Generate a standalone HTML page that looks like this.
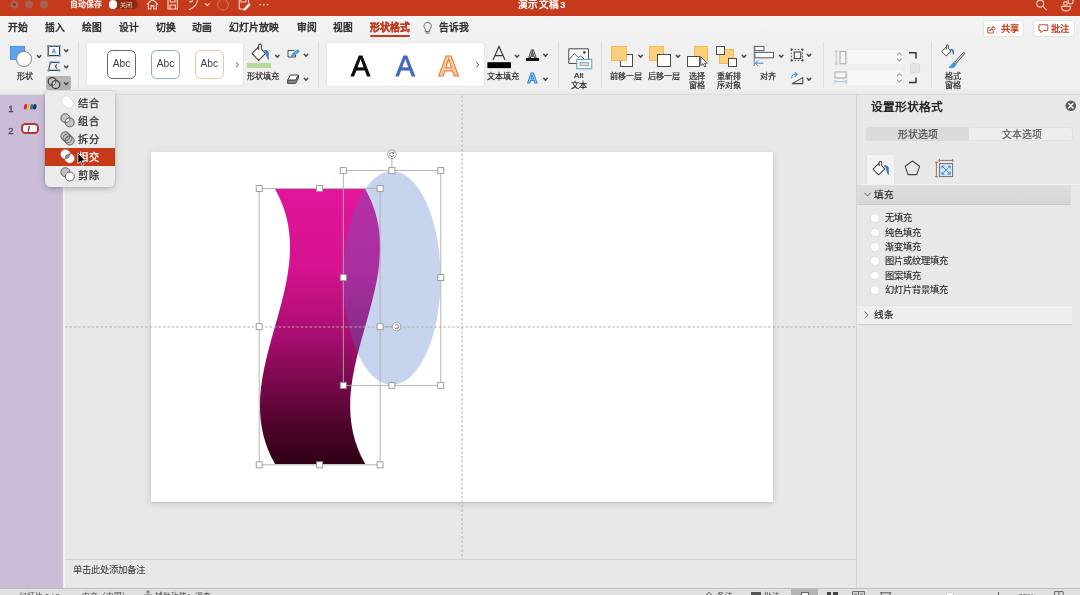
<!DOCTYPE html>
<html lang="zh-CN">
<head>
<meta charset="utf-8">
<title>演示文稿3</title>
<style>
*{box-sizing:border-box;margin:0;padding:0}
html,body{width:1080px;height:595px;overflow:hidden;background:#e8e8e8;font-family:"Liberation Sans",sans-serif;color:#333}
.a{position:absolute}
.t{position:absolute;white-space:nowrap;line-height:1;font-size:9.6px;color:#2f2f2f;filter:blur(0.3px)}
.b{font-weight:bold}
svg{position:absolute;overflow:visible}
#titlebar{left:0;top:0;width:1080px;height:15.8px;background:#c43a1b}
#tabs{left:0;top:16px;width:1080px;height:22px;background:linear-gradient(#f4f4f4,#f0f0f0)}
#ribbon{left:0;top:38px;width:1080px;height:57.2px;background:#f0f0f0;border-bottom:1.1px solid #dbdbdb}
#sidebar{left:0;top:95.3px;width:63px;height:493px;background:#c9bdd8}
#sidestrip{left:63px;top:95.3px;width:2px;height:493px;background:#f4f1f7}
#canvas{left:65px;top:95.3px;width:791px;height:493px;background:#e8e8e8}
#panel{left:856px;top:95.3px;width:224px;height:493px;background:#e8e8e8;border-left:1px solid #d4d4d4}
#status{left:0;top:587.6px;width:1080px;height:8px;background:#e1e1e1;border-top:1px solid #bfbfbf;overflow:hidden}
.sep{position:absolute;width:1px;background:#dedede;top:42px;height:46px}
.tab{font-size:9.8px;color:#242424;-webkit-text-stroke-width:0.4px}
.abc{width:29px;height:29px;border:1.55px solid #555;border-radius:5.5px;background:#fff;font-size:10.2px;line-height:26px;text-align:center;color:#3c3c3c;filter:blur(0.25px)}
.wa{filter:blur(0.3px);top:51.4px;width:40px;height:30px;font-size:28.6px;line-height:30px;text-align:center;-webkit-text-stroke-width:0.8px}
.mi{font-size:10.2px;letter-spacing:0.3px;color:#2e2e2e;-webkit-text-stroke-width:0.25px;margin-top:0.4px}
.pl{font-size:9.25px;color:#2a2a2a;-webkit-text-stroke-width:0.15px}
.rb{width:9.6px;height:9.6px;border-radius:50%;background:#fff;border:0.7px solid #dcdcdc}
.lbl{font-size:8.1px;color:#262626;-webkit-text-stroke-width:0.2px}
</style>
</head>
<body>
<div id="titlebar" class="a">
<svg width="60" height="16" style="left:0;top:0" viewBox="0 0 60 16">
<circle cx="14.5" cy="4.5" r="4.1" fill="#a86050"/><circle cx="14.5" cy="4.5" r="1.3" fill="#6e2a1c"/>
<circle cx="29" cy="4.5" r="4.1" fill="#a86050"/>
<circle cx="44" cy="4.5" r="4.1" fill="#a86050"/>
</svg>
<div class="t b" style="left:69.8px;top:1.1px;font-size:7.9px;color:#fff">自动保存</div>
<div class="a" style="left:108.5px;top:0;width:29px;height:9.2px;border-radius:0 0 5px 5px/0 0 5px 5px;background:#8d2a15;border-radius:5px"></div>
<div class="a" style="left:109px;top:0.4px;width:8.4px;height:8.4px;border-radius:50%;background:#fff"></div>
<div class="t" style="left:120px;top:1.6px;font-size:6px;color:#f3d9d2">关闭</div>
<svg width="130" height="16" style="left:140px;top:0" viewBox="140 0 130 16" fill="none" stroke="#f7d6cc" stroke-width="1.1" stroke-linecap="round" stroke-linejoin="round">
<path d="M147.2 4.2 L152.4 -0.6 L157.6 4.2 M148.4 3.4 V9 H151 V5.6 H153.8 V9 H156.4 V3.4"/>
<path d="M168 -1 V9 H177.4 V0.5 L176 -1 M170 9 V5 H175.4 V9 M170.2 -1 V2 H175 V-1"/>
<path d="M189.5 9.6 C194 7.5 197.8 4 197.6 -1 M189.5 1.6 H192.2 V-1"/>
<path d="M205.4 3.6 L207.3 5.6 L209.2 3.6" stroke-width="1.2"/>
<path d="M226 0.2 A5.4 5.4 0 1 1 220 0.2" stroke="#d0705a"/>
<path d="M239.2 -1 V9 H243.5 M239.2 9 M241 -1 V2 H246 V-1 M248.6 -1 V2.5"/>
<path d="M244.3 8.6 L248.8 3.4 L250.3 4.8 L245.8 9.8 L243.8 10.2 Z" fill="#fff" stroke="#fff" stroke-width="0.6"/>
<g fill="#f7d6cc" stroke="none"><circle cx="260.2" cy="4.6" r="0.9"/><circle cx="263.9" cy="4.6" r="0.9"/><circle cx="267.6" cy="4.6" r="0.9"/></g>
</svg>
<div class="t b" style="left:518px;top:0.2px;font-size:9.7px;color:#fff;letter-spacing:0.25px">演示文稿<span style="margin-left:1px">3</span></div>
<svg width="50" height="16" style="left:1030px;top:0" viewBox="1030 0 50 16" fill="none" stroke="#f7d6cc" stroke-width="1.1" stroke-linecap="round">
<circle cx="1040.2" cy="3.6" r="3.5"/><path d="M1042.8 6.2 L1046.4 9.8"/>
<circle cx="1070.6" cy="1.4" r="2.5"/><circle cx="1065.4" cy="3.4" r="1.8"/><path d="M1061.4 6.4 H1070.6 C1070.6 12.4 1061.4 12.4 1061.4 6.4 Z"/>
</svg>
</div>
<div id="tabs" class="a">
<div class="t tab" style="left:8.3px;top:7.1px">开始</div>
<div class="t tab" style="left:45.4px;top:7.1px">插入</div>
<div class="t tab" style="left:81.8px;top:7.1px">绘图</div>
<div class="t tab" style="left:119.2px;top:7.1px">设计</div>
<div class="t tab" style="left:155.8px;top:7.1px">切换</div>
<div class="t tab" style="left:192.3px;top:7.1px">动画</div>
<div class="t tab" style="left:229px;top:7.1px">幻灯片放映</div>
<div class="t tab" style="left:296.8px;top:7.1px">审阅</div>
<div class="t tab" style="left:333px;top:7.1px">视图</div>
<div class="t tab b" style="left:369.6px;top:7.1px;color:#c23b1c">形状格式</div>
<div class="a" style="left:369.5px;top:19.4px;width:40px;height:1.8px;background:#c23b1c;border-radius:1px"></div>
<svg width="12" height="14" style="left:422px;top:5px" viewBox="0 0 12 14" fill="none" stroke="#555" stroke-width="0.9" stroke-linecap="round"><path d="M3.6 8.6 C1 6.5 1.4 1.4 5.6 1.4 C9.8 1.4 10.2 6.5 7.6 8.6 V10.4 H3.6 Z M4 12 H7.2"/></svg>
<div class="t tab" style="left:438.6px;top:7.1px">告诉我</div>
<div class="a" style="left:982.6px;top:3.8px;width:41.4px;height:17.6px;background:#fff;border:1px solid #e6e4e2;border-radius:3px"></div>
<svg width="9" height="9" style="left:987.4px;top:8.8px" viewBox="0 0 9 9" fill="none" stroke="#c23b1c" stroke-width="0.9" stroke-linecap="round" stroke-linejoin="round"><path d="M2.8 2.6 H0.8 V8 H6.4 V6.4 M2.8 5.6 C3.2 3.6 4.4 2.8 6 2.8 V1 L8.2 3.4 L6 5.6 V4.2 C4.6 4.2 3.6 4.6 2.8 5.6 Z"/></svg>
<div class="t b" style="left:1001px;top:8.5px;font-size:9.3px;color:#c23b1c">共享</div>
<div class="a" style="left:1033px;top:3.8px;width:41.6px;height:17.6px;background:#fff;border:1px solid #e6e4e2;border-radius:3px"></div>
<svg width="12" height="11" style="left:1037.8px;top:8.2px" viewBox="0 0 12 11" fill="none" stroke="#c23b1c" stroke-width="0.95" stroke-linejoin="round"><path d="M1 0.8 H9.8 V6.4 H5.2 L3 8.6 V6.4 H1 Z"/></svg>
<div class="t b" style="left:1051.2px;top:8.5px;font-size:9.3px;color:#c23b1c">批注</div>
</div>
<div id="ribbon" class="a"></div>
<div id="rc" class="a" style="left:0;top:0;width:1080px;height:95px">
<div class="a" style="left:0;top:88.5px;width:1080px;height:5.7px;background:linear-gradient(#eeeeee,#eaeaea)"></div>
<div class="a" style="left:0;top:94.2px;width:1080px;height:1.1px;background:#dcdcdc"></div>
<!-- shapes -->
<div class="a" style="left:10.2px;top:45.5px;width:14.8px;height:14.3px;background:#5fa2ee;border:1px solid #4b93e3"></div>
<div class="a" style="left:16.2px;top:51.2px;width:15.6px;height:15.6px;border-radius:50%;background:#fff;border:1.3px solid #828282"></div>
<div class="t lbl" style="left:16.8px;top:72.5px">形状</div>
<!-- textbox icon -->
<svg width="14" height="12" style="left:46.5px;top:44.5px" viewBox="0 0 14 12"><rect x="1.2" y="1.2" width="11.4" height="9.4" fill="#f6f6f6" stroke="#3c3c3c" stroke-width="1.2"/><g fill="#4a90d9"><rect x="0.2" y="0.2" width="2" height="2"/><rect x="11.6" y="0.2" width="2" height="2"/><rect x="0.2" y="9.6" width="2" height="2"/><rect x="11.6" y="9.6" width="2" height="2"/></g><path d="M5.3 8.2 L6.9 3.8 L8.5 8.2 M5.9 6.8 H7.9" fill="none" stroke="#4f8fdc" stroke-width="1"/></svg>
<!-- edit shape icon -->
<svg width="14" height="11" style="left:46.5px;top:61px" viewBox="0 0 14 11"><path d="M3.6 1.4 H11.4 M3.6 1.4 C2.8 4 1.8 6.6 1.6 9.4 H12 M10 3.4 C8 4.4 8.2 6.6 10.2 7.4" fill="none" stroke="#444" stroke-width="1.1"/><g fill="#4a90d9"><circle cx="3.6" cy="1.4" r="1.2"/><circle cx="11.6" cy="1.4" r="1.2"/><circle cx="1.6" cy="9.4" r="1.2"/><circle cx="12.2" cy="9.4" r="1.2"/></g></svg>
<!-- merge button -->
<div class="a" style="left:45.6px;top:76px;width:25.2px;height:14.4px;background:#b5b5b5;border-radius:2px"></div>
<svg width="14" height="13" style="left:46.6px;top:76.8px" viewBox="0 0 14 13"><circle cx="5.2" cy="4.5" r="4" fill="#c4c4c4" stroke="#3c3c3c" stroke-width="1.25"/><circle cx="8.8" cy="7.6" r="4" fill="#c4c4c4" stroke="#3c3c3c" stroke-width="1.25"/><path d="M5.35 8.5 A4 4 0 0 1 8.65 3.6 A4 4 0 0 1 5.35 8.5 Z" fill="#fff" stroke="#3c3c3c" stroke-width="0.9"/></svg>
<div class="sep" style="left:78px"></div>
<!-- shape styles gallery -->
<div class="a" style="left:86.8px;top:43.4px;width:156.6px;height:42px;background:#fff;box-shadow:0 0 0 0.6px #e0e0e0;border-radius:3px"></div>
<div class="a abc" style="left:107px;top:50px;border-color:#666">Abc</div>
<div class="a abc" style="left:151px;top:50px;border-color:#8fa8d2">Abc</div>
<div class="a abc" style="left:194.8px;top:50px;border-color:#f3c3a2">Abc</div>
<!-- shape fill -->
<svg width="20" height="19" style="left:250.5px;top:43px" viewBox="0 0 20 19" fill="none" stroke-linejoin="round" stroke-linecap="round">
<path d="M7.6 3.6 L1.2 10.6 L7.6 17.4 L14.4 10.6 L10.4 6.2 V2.6 C10.4 0.6 7.6 0.6 7.6 2.6 V6.6" stroke="#454545" stroke-width="1.15" fill="#fff"/>
<path d="M13.4 7.8 C16 6.6 17.6 8.6 17.4 11 C17.2 13.2 17.4 14.6 17.4 16.4 C16.2 14.4 15.6 12.8 15.4 10.8 C15.2 9.4 14.6 8.6 13.4 7.8 Z" fill="#3f72c4" stroke="#3f72c4" stroke-width="0.8"/>
</svg>
<div class="a" style="left:247px;top:62.5px;width:24.4px;height:5.6px;background:#b5da9b"></div>
<div class="t lbl" style="left:247.4px;top:72.5px">形状填充</div>
<!-- shape outline (pen) -->
<svg width="14" height="10" style="left:286.5px;top:48.6px" viewBox="0 0 14 10" fill="none" stroke-linecap="round" stroke-linejoin="round">
<path d="M7 1.4 H1 V8 H8.6 V6" stroke="#4a4a4a" stroke-width="1"/>
<path d="M4.6 7 L5.4 4.8 L10.6 0.8 L12.4 2.4 L7.2 6.4 Z" fill="#5aa7e8" stroke="#3f86d6" stroke-width="0.9"/>
</svg>
<!-- shape effects (eraser-like) -->
<svg width="14" height="11" style="left:286px;top:73.8px" viewBox="0 0 14 11" fill="none" stroke-linejoin="round">
<path d="M4.4 1 H12.4 L9.6 6.2 H1.6 Z" fill="#fff" stroke="#444" stroke-width="1"/>
<path d="M1.6 6.2 H9.6 L12.4 1 V4 L9.6 9.4 H1.6 Z" fill="#8a8a8a" stroke="#444" stroke-width="1"/>
</svg>
<div class="sep" style="left:318px"></div>
<!-- wordart gallery -->
<div class="a" style="left:326.8px;top:43.4px;width:157.4px;height:42.4px;background:#fff;box-shadow:0 0 0 0.6px #e0e0e0;border-radius:3px"></div>
<div class="a wa" style="left:340.5px;color:#0a0a0a">A</div>
<div class="a wa" style="left:385.3px;color:#4369bd">A</div>
<div class="a wa" style="left:428.7px;color:#f9caa6;font-weight:bold;font-size:29.4px;-webkit-text-stroke:1.1px #ee7d3c;top:50.8px">A</div>
<!-- text fill -->
<svg width="26" height="24" style="left:486px;top:45px" viewBox="0 0 26 24" fill="none">
<path d="M7 15 L13 1.4 L19 15 M9 10.6 H17" stroke="#3a3a3a" stroke-width="1.15"/>
<rect x="1.4" y="17.2" width="23.6" height="5.9" fill="#000"/>
</svg>
<div class="t lbl" style="left:487.4px;top:72.5px">文本填充</div>
<!-- text outline -->
<div class="a" style="left:526px;top:46.4px;width:13px;height:13px;font-size:11.6px;line-height:13px;font-weight:bold;text-align:center;color:#f4f4f4;-webkit-text-stroke:0.9px #3c3c3c;filter:blur(0.25px);margin-top:0.8px">A</div>
<div class="a" style="left:526.2px;top:58.4px;width:12.6px;height:2.4px;background:#111"></div>
<!-- text effects -->
<div class="a" style="left:525.4px;top:71px;width:14px;height:14px;font-size:14px;line-height:14px;font-weight:bold;color:#bfe0fb;-webkit-text-stroke:1px #2f82d6;text-align:center;filter:blur(0.25px)">A</div>
<div class="sep" style="left:558px"></div>
<!-- alt text -->
<svg width="25" height="22" style="left:567.5px;top:47.6px" viewBox="0 0 25 22" fill="none" stroke-linejoin="round">
<rect x="0.8" y="0.8" width="19.6" height="14.6" fill="#fff" stroke="#444" stroke-width="1"/>
<path d="M1 11.6 L6.4 5.6 L10.4 9.6 L12.4 8 L16 11" stroke="#444" stroke-width="0.9"/>
<circle cx="16.4" cy="4.4" r="1.3" fill="#444"/>
<rect x="8.8" y="11.4" width="15" height="9.4" fill="#fff" stroke="#3f9ad6" stroke-width="1"/>
<rect x="12" y="14.6" width="8.6" height="3" fill="#e6e6e6" stroke="#777" stroke-width="0.7"/>
</svg>
<div class="t lbl" style="left:574px;top:72.4px">Alt</div>
<div class="t lbl" style="left:570.8px;top:81.8px">文本</div>
<div class="sep" style="left:601px"></div>
<!-- bring forward -->
<div class="a" style="left:620px;top:54px;width:13.4px;height:13.2px;background:#fff;border:1.1px solid #4a4a4a"></div>
<div class="a" style="left:611px;top:46px;width:16px;height:15px;background:#fbcf7c;border:1px solid #f0b95a"></div>
<div class="t lbl" style="left:610.4px;top:72.5px">前移一层</div>
<!-- send backward -->
<div class="a" style="left:649px;top:46px;width:15.4px;height:15px;background:#fbcf7c;border:1px solid #f0b95a"></div>
<div class="a" style="left:657.4px;top:54px;width:13.8px;height:13.2px;background:#fff;border:1.1px solid #4a4a4a"></div>
<div class="t lbl" style="left:648px;top:72.5px">后移一层</div>
<!-- selection pane -->
<div class="a" style="left:694px;top:46px;width:14.4px;height:15px;background:#fbcf7c;border:1px solid #f0b95a"></div>
<div class="a" style="left:686.8px;top:56px;width:13.6px;height:11.2px;background:#fff;border:1.1px solid #4a4a4a"></div>
<svg width="9" height="12" style="left:699.6px;top:55.6px" viewBox="0 0 9 12"><path d="M0.8 0.8 V9.6 L3 7.6 L4.6 11 L6 10.4 L4.5 7.2 H7.4 Z" fill="#fff" stroke="#444" stroke-width="0.9" stroke-linejoin="round"/></svg>
<div class="t lbl" style="left:689.4px;top:72.5px">选择</div>
<div class="t lbl" style="left:689.4px;top:81.8px">窗格</div>
<!-- reorder -->
<div class="a" style="left:719px;top:49px;width:15.2px;height:15px;background:#fbcf7c;border:1px solid #f0b95a"></div>
<div class="a" style="left:715.8px;top:46px;width:9.4px;height:8.8px;background:#fff;border:1.1px solid #4a4a4a"></div>
<div class="a" style="left:727.6px;top:58px;width:9.4px;height:9.2px;background:#fff;border:1.1px solid #4a4a4a"></div>
<div class="t lbl" style="left:717.2px;top:72.5px">重新排</div>
<div class="t lbl" style="left:717.2px;top:81.8px">序对象</div>
<!-- align -->
<svg width="24" height="23" style="left:752.5px;top:45px" viewBox="0 0 24 23" fill="none">
<path d="M1.2 0.6 V21" stroke="#7d8791" stroke-width="1"/>
<rect x="1.9" y="1.4" width="9" height="4.2" fill="#fff" stroke="#5a5a5a" stroke-width="1"/>
<rect x="1.9" y="7.4" width="18.6" height="5.4" fill="#fff" stroke="#5a5a5a" stroke-width="1"/>
<path d="M10 18.2 H2.6 M5 15.6 L2.4 18.2 L5 20.8" stroke="#3f86d6" stroke-width="1" stroke-linecap="round" stroke-linejoin="round"/>
</svg>
<div class="t lbl" style="left:759.8px;top:72.5px">对齐</div>
<!-- group -->
<svg width="14" height="14" style="left:789.8px;top:48px" viewBox="0 0 14 14" fill="none" stroke="#444">
<rect x="4.2" y="4" width="6.6" height="6.6" stroke-width="1.1"/>
<path d="M1.4 1.4 V12.6 M12.6 1.4 V12.6 M1.4 1.4 H12.6 M1.4 12.6 H12.6" stroke-width="0.9" stroke-dasharray="1.6 1.6"/>
<g fill="#444" stroke="none"><rect x="0.6" y="0.6" width="1.8" height="1.8"/><rect x="11.6" y="0.6" width="1.8" height="1.8"/><rect x="0.6" y="11.6" width="1.8" height="1.8"/><rect x="11.6" y="11.6" width="1.8" height="1.8"/></g>
</svg>
<!-- rotate -->
<svg width="14" height="13" style="left:789.6px;top:72.2px" viewBox="0 0 14 13" fill="none" stroke-linejoin="round" stroke-linecap="round">
<path d="M2.2 11.6 H12.8 V5.6 Z" stroke="#444" stroke-width="1.05"/>
<path d="M1.8 6 C1.6 3.4 4 1.6 6.8 2.4 M5.2 0.6 L7.2 2.5 L5.2 4.4" stroke="#3f86d6" stroke-width="1.05"/>
</svg>
<div class="sep" style="left:823px"></div>
<!-- size -->
<svg width="13" height="15" style="left:833.5px;top:49.6px" viewBox="0 0 13 15" fill="none"><rect x="6" y="1.4" width="5.8" height="12.4" stroke="#a5a5a5" stroke-width="1" fill="#f6f6f6"/><path d="M2.2 1 V14.2 M0.6 1 H3.8 M0.6 14.2 H3.8" stroke="#a9bfd8" stroke-width="0.9"/></svg>
<div class="a" style="left:847.4px;top:48.5px;width:56.6px;height:16.4px;background:#f8f8f8;border:1px solid #ececec;border-radius:2px"></div>
<svg width="13" height="15" style="left:833.5px;top:70.4px" viewBox="0 0 13 15" fill="none"><rect x="1" y="2" width="11" height="6" stroke="#a5a5a5" stroke-width="1" fill="#f6f6f6"/><path d="M0.8 11.6 H12.2 M0.8 10 V13.2 M12.2 10 V13.2" stroke="#a9bfd8" stroke-width="0.9"/></svg>
<div class="a" style="left:847.4px;top:69.2px;width:56.6px;height:16.4px;background:#f8f8f8;border:1px solid #ececec;border-radius:2px"></div>
<svg width="10" height="40" style="left:895px;top:48px" viewBox="0 0 10 40" fill="none" stroke="#a2a2a2" stroke-width="1.1" stroke-linecap="round" stroke-linejoin="round">
<path d="M2.4 6.8 L4.4 4.8 L6.4 6.8 M2.4 11 L4.4 13 L6.4 11 M2.4 27.6 L4.4 25.6 L6.4 27.6 M2.4 31.8 L4.4 33.8 L6.4 31.8"/></svg>
<svg width="12" height="34" style="left:908px;top:50.6px" viewBox="0 0 12 34" fill="none">
<path d="M1 1.8 H8 V7.4 M1 31.6 H8 V26.4" stroke="#333" stroke-width="1.5"/>
<rect x="2.6" y="12.6" width="9" height="9" rx="1.6" fill="#e4e4e4" stroke="#d6d6d6" stroke-width="0.8"/>
</svg>
<div class="sep" style="left:931px"></div>
<!-- format pane -->
<svg width="26" height="26" style="left:940.5px;top:44.4px" viewBox="0 0 26 26" fill="none" stroke-linejoin="round" stroke-linecap="round">
<path d="M5.4 2.8 L0.8 7.6 L5.2 12 L10 7.4 L7.4 4.4 V2 C7.4 0.4 5.4 0.4 5.4 2 V5" stroke="#444" stroke-width="1" fill="#fff"/>
<path d="M9.6 5.4 C11.6 4.6 12.8 6 12.6 8 L12.6 10.4 C11.8 9 11.4 8 11.2 6.8 Z" fill="#3f72c4" stroke="#3f72c4" stroke-width="0.8"/>
<path d="M23.6 9.6 L15 19.6 L13.6 18.2 L22.4 8.6 Z" fill="#fff" stroke="#444" stroke-width="1"/>
<path d="M13.4 18.2 L15.2 20 C14.4 23.4 11 24.6 8 23.2 C10.4 22.4 10.6 19.2 13.4 18.2 Z" fill="#3f9ad6" stroke="#3f9ad6" stroke-width="0.8"/>
</svg>
<div class="t lbl" style="left:944.6px;top:72.5px">格式</div>
<div class="t lbl" style="left:944.6px;top:81.8px">窗格</div>


<svg width="1080" height="95" style="left:0;top:0" viewBox="0 0 1080 95" fill="none" stroke="#484848" stroke-width="1.45" stroke-linecap="round" stroke-linejoin="round">
<path d="M37.35 55.60 L39.10 57.60 L40.85 55.60"/><path d="M64.45 49.70 L66.20 51.70 L67.95 49.70"/><path d="M64.45 66.10 L66.20 68.10 L67.95 66.10"/><path d="M64.45 82.80 L66.20 84.80 L67.95 82.80"/><path d="M275.55 55.30 L277.30 57.30 L279.05 55.30"/><path d="M304.25 54.30 L306.00 56.30 L307.75 54.30"/><path d="M304.25 78.30 L306.00 80.30 L307.75 78.30"/><path d="M515.25 55.30 L517.00 57.30 L518.75 55.30"/><path d="M543.75 54.30 L545.50 56.30 L547.25 54.30"/><path d="M543.75 78.30 L545.50 80.30 L547.25 78.30"/><path d="M638.85 55.30 L640.60 57.30 L642.35 55.30"/><path d="M676.25 55.30 L678.00 57.30 L679.75 55.30"/><path d="M742.25 55.30 L744.00 57.30 L745.75 55.30"/><path d="M779.45 55.30 L781.20 57.30 L782.95 55.30"/><path d="M807.25 54.30 L809.00 56.30 L810.75 54.30"/><path d="M807.25 78.30 L809.00 80.30 L810.75 78.30"/><path d="M236.4 62.8 L238.6 64.8 L236.4 66.8" stroke-width="1"/><path d="M476.6 62.8 L478.8 64.8 L476.6 66.8" stroke-width="1"/>
</svg>
</div>
<div id="sidebar" class="a"></div>
<div class="t" style="left:8.2px;top:103.8px;font-size:9.6px;color:#4a4558;-webkit-text-stroke-width:0.3px">1</div>
<div class="t" style="left:8.2px;top:125.8px;font-size:9.6px;color:#4a4558;-webkit-text-stroke-width:0.3px">2</div>
<svg width="20" height="10" style="left:22px;top:102px" viewBox="0 0 20 10"><g>
<ellipse cx="3.6" cy="4.8" rx="1.7" ry="2.8" fill="#d8263a" transform="rotate(12 3.6 4.8)"/>
<ellipse cx="6.4" cy="4.8" rx="1.7" ry="2.8" fill="#f2c230" transform="rotate(12 6.4 4.8)"/>
<ellipse cx="9.8" cy="4.8" rx="1.7" ry="2.8" fill="#2f6fd0" transform="rotate(12 9.8 4.8)"/>
<ellipse cx="12.8" cy="4.8" rx="1.7" ry="2.8" fill="#123a4a" transform="rotate(12 12.8 4.8)"/>
</g></svg>
<div class="a" style="left:21.4px;top:122.8px;width:18px;height:10.8px;border:2px solid #b23a2a;border-radius:4.5px;background:#fff"></div>
<svg width="6" height="8" style="left:25.6px;top:124.6px" viewBox="0 0 6 8"><path d="M3.4 0.8 L2.2 6.6" stroke="#7a1050" stroke-width="1.2"/></svg>

<div id="sidestrip" class="a"></div>
<div id="canvas" class="a"></div>
<div class="a" style="left:150.8px;top:151.8px;width:622px;height:349.8px;background:#fff;box-shadow:0 2px 8px rgba(0,0,0,0.13),0 0.5px 2px rgba(0,0,0,0.08)"></div>
<svg width="1080" height="595" style="left:0;top:0" viewBox="0 0 1080 595">
<defs>
<linearGradient id="pg" x1="0" y1="0" x2="0" y2="1">
<stop offset="0" stop-color="#e3159c"/><stop offset="0.3" stop-color="#d4128e"/><stop offset="0.55" stop-color="#a50d6e"/><stop offset="0.8" stop-color="#5e0637"/><stop offset="1" stop-color="#2e0014"/>
</linearGradient>
</defs>
<path d="M275 189 L365.2 189 C417.2 280.7 313.2 372.3 365.2 464 L275 464 C223 372.3 327 280.7 275 189 Z" fill="url(#pg)"/>
<ellipse cx="392" cy="278" rx="48.6" ry="106.8" fill="#4472c4" fill-opacity="0.3"/>
<g fill="none" stroke="#adadad" stroke-width="0.9">
<rect x="259.2" y="188.6" width="120.9" height="276.2"/>
<rect x="343.3" y="170.6" width="97.5" height="214.8"/>
<path d="M391.9 170.6 V158.8"/>
<path d="M380.1 326.7 H392.4"/>
</g>
<g fill="none" stroke="#adadad" stroke-width="1" stroke-dasharray="2.5 1.95">
<path d="M462 95.5 V559"/>
<path d="M65 327 H856"/>
</g>
<rect x="256.2" y="185.6" width="6" height="6" fill="#fff" stroke="#959595" stroke-width="0.9"/><rect x="316.6" y="185.6" width="6" height="6" fill="#fff" stroke="#959595" stroke-width="0.9"/><rect x="377.1" y="185.6" width="6" height="6" fill="#fff" stroke="#959595" stroke-width="0.9"/><rect x="256.2" y="323.7" width="6" height="6" fill="#fff" stroke="#959595" stroke-width="0.9"/><rect x="377.1" y="323.7" width="6" height="6" fill="#fff" stroke="#959595" stroke-width="0.9"/><rect x="256.2" y="461.8" width="6" height="6" fill="#fff" stroke="#959595" stroke-width="0.9"/><rect x="316.6" y="461.8" width="6" height="6" fill="#fff" stroke="#959595" stroke-width="0.9"/><rect x="377.1" y="461.8" width="6" height="6" fill="#fff" stroke="#959595" stroke-width="0.9"/><rect x="340.3" y="167.6" width="6" height="6" fill="#fff" stroke="#959595" stroke-width="0.9"/><rect x="388.9" y="167.6" width="6" height="6" fill="#fff" stroke="#959595" stroke-width="0.9"/><rect x="437.8" y="167.6" width="6" height="6" fill="#fff" stroke="#959595" stroke-width="0.9"/><rect x="340.3" y="274.6" width="6" height="6" fill="#fff" stroke="#959595" stroke-width="0.9"/><rect x="437.8" y="274.6" width="6" height="6" fill="#fff" stroke="#959595" stroke-width="0.9"/><rect x="340.3" y="382.4" width="6" height="6" fill="#fff" stroke="#959595" stroke-width="0.9"/><rect x="388.9" y="382.4" width="6" height="6" fill="#fff" stroke="#959595" stroke-width="0.9"/><rect x="437.8" y="382.4" width="6" height="6" fill="#fff" stroke="#959595" stroke-width="0.9"/>
<circle cx="391.9" cy="154.4" r="4.3" fill="#fff" stroke="#959595" stroke-width="0.9"/>
<path d="M393.6 153 A2.2 2.2 0 1 0 394 155.2 M393.9 151.6 V153.3 H392.2" fill="none" stroke="#666" stroke-width="0.8"/>
<circle cx="396.5" cy="326.7" r="4.1" fill="#fff" stroke="#959595" stroke-width="0.9"/>
<path d="M395 325.4 A2.1 2.1 0 1 1 394.7 327.6 M398 328.8 L397.2 327.2" fill="none" stroke="#666" stroke-width="0.8"/>
</svg>
<div class="a" style="left:65px;top:559px;width:791px;height:1px;background:#d2d2d2"></div>
<div class="t" style="left:72.6px;top:565.8px;font-size:9.45px;color:#303030;font-family:'Liberation Serif',serif">单击此处添加备注</div>

<div id="panel" class="a"></div>
<div class="t b" style="left:870.8px;top:101.1px;font-size:11.7px;color:#262626">设置形状格式</div>
<svg width="12" height="12" style="left:1065px;top:100px" viewBox="0 0 12 12"><circle cx="5.8" cy="5.8" r="5.3" fill="#5c5c5c"/><path d="M3.6 3.6 L8 8 M8 3.6 L3.6 8" stroke="#fff" stroke-width="1.4" stroke-linecap="round"/></svg>
<div class="a" style="left:865.5px;top:127.4px;width:207.5px;height:13.8px;background:#ededed;border:1px solid #e0e0e0;border-radius:3px"></div>
<div class="a" style="left:865.5px;top:127.4px;width:103.5px;height:13.8px;background:#dadada;border-radius:3px 0 0 3px"></div>
<div class="t pl" style="left:897.6px;top:129.6px;font-size:9.9px;color:#484848">形状选项</div>
<div class="t pl" style="left:1002px;top:129.6px;font-size:9.9px;color:#505050">文本选项</div>
<div class="a" style="left:866px;top:153.6px;width:29.4px;height:32px;background:#f3f3f3;border:1px solid #e2e2e2;border-bottom:none;border-radius:2px 2px 0 0"></div>
<svg width="20" height="17" style="left:872px;top:160px" viewBox="0 0 20 17" fill="none" stroke-linejoin="round" stroke-linecap="round">
<path d="M7.2 3.2 L1 9.2 L6.6 14.8 L12.8 8.8 L9.6 5.6 V2.6 C9.6 0.8 7.2 0.8 7.2 2.6 V5.8" stroke="#444" stroke-width="1.05" fill="#fff"/>
<path d="M12.4 6 C15 5 16.6 6.8 16.4 9.2 L16.4 14.6 C15.2 12.6 14.8 11 14.6 9.2 C14.4 7.8 13.6 6.8 12.4 6 Z" fill="#3f72c4" stroke="#3f72c4" stroke-width="0.8"/>
</svg>
<svg width="17" height="16" style="left:904px;top:160px" viewBox="0 0 17 16" fill="none"><path d="M8.4 1 L15.6 6.2 L12.8 14.6 H4 L1.2 6.2 Z" stroke="#444" stroke-width="1.1" stroke-linejoin="round"/></svg>
<svg width="19" height="19" style="left:934.5px;top:158.6px" viewBox="0 0 19 19" fill="none">
<path d="M1.4 2.6 V18.4 M0 17.6 H3 M0 3.4 H3 M3.6 1.4 H18.4 M4.4 0 V3 M17.6 0 V3" stroke="#8a6a5a" stroke-width="0.9"/>
<rect x="4.6" y="4.6" width="13" height="13" fill="#d6e6f7" stroke="#666" stroke-width="0.9"/>
<path d="M7 7 L15.2 15.2 M15.2 7 L7 15.2 M7 9.4 V7 H9.4 M12.8 7 H15.2 V9.4 M15.2 12.8 V15.2 H12.8 M9.4 15.2 H7 V12.8" stroke="#3f86d6" stroke-width="1"/>
</svg>
<div class="a" style="left:857px;top:184.2px;width:223px;height:1px;background:#f1f1f1"></div>
<div class="a" style="left:857px;top:185.2px;width:214.4px;height:20px;background:linear-gradient(#dedede,#d6d6d6);border-bottom:1px solid #cdcdcd"></div>
<svg width="8" height="6" style="left:863.6px;top:192.4px" viewBox="0 0 8 6" fill="none" stroke="#555" stroke-width="0.9" stroke-linecap="round" stroke-linejoin="round"><path d="M0.8 1 L3.6 4 L6.4 1"/></svg>
<div class="t pl" style="left:874px;top:190.3px;font-size:9.6px;color:#2b2b2b;-webkit-text-stroke-width:0.2px">填充</div>
<div class="a rb" style="left:870.2px;top:213.3px"></div><div class="t pl" style="left:884.8px;top:214.3px">无填充</div>
<div class="a rb" style="left:870.2px;top:227.6px"></div><div class="t pl" style="left:884.8px;top:228.6px">纯色填充</div>
<div class="a rb" style="left:870.2px;top:242.0px"></div><div class="t pl" style="left:884.8px;top:243.0px">渐变填充</div>
<div class="a rb" style="left:870.2px;top:256.3px"></div><div class="t pl" style="left:884.8px;top:257.3px">图片或纹理填充</div>
<div class="a rb" style="left:870.2px;top:270.7px"></div><div class="t pl" style="left:884.8px;top:271.7px">图案填充</div>
<div class="a rb" style="left:870.2px;top:285.1px"></div><div class="t pl" style="left:884.8px;top:286.1px">幻灯片背景填充</div>

<div class="a" style="left:857px;top:305px;width:215px;height:19.6px;background:#efefef;border-bottom:1px solid #cfcfcf;border-top:1px solid #e3e3e3"></div>
<svg width="6" height="8" style="left:864.2px;top:310.8px" viewBox="0 0 6 8" fill="none" stroke="#555" stroke-width="0.9" stroke-linecap="round" stroke-linejoin="round"><path d="M1 0.8 L4 3.8 L1 6.8"/></svg>
<div class="t pl" style="left:874px;top:310.2px;font-size:9.6px;color:#2b2b2b;-webkit-text-stroke-width:0.2px">线条</div>

<div class="a" style="left:45.2px;top:91px;width:69.4px;height:95.8px;background:#ebebeb;border-radius:4px 4px 5.5px 5.5px;box-shadow:0 2px 6px rgba(0,0,0,0.22),0 0 0 0.6px rgba(0,0,0,0.10)"></div>
<div class="a" style="left:45.2px;top:148.2px;width:69.4px;height:17.6px;background:#c63a1a"></div>
<svg width="1080" height="595" style="left:0;top:0" viewBox="0 0 1080 595"><path d="M62.2 98.2 A4.6 4.6 0 0 1 68.9 96.9 L72.6 100.4 A4.6 4.6 0 0 1 72.4 106.6 A4.6 4.6 0 0 1 66.2 107.2 L62.4 103.6 A4.6 4.6 0 0 1 62.2 98.2 Z" fill="#fff" stroke="#d4d4d4" stroke-width="0.8"/><circle cx="65.4" cy="118.2" r="4.5" fill="#c2c2c2" stroke="#555" stroke-width="0.9"/><circle cx="69.7" cy="122.4" r="4.5" fill="#c2c2c2" stroke="#555" stroke-width="0.9"/><path d="M65.21 122.70 A4.5 4.5 0 0 1 69.89 117.90 A4.5 4.5 0 0 1 65.21 122.70 Z" fill="#fff" stroke="#555" stroke-width="0.8"/><circle cx="65.4" cy="136.3" r="4.5" fill="#c2c2c2" stroke="#555" stroke-width="0.9"/><circle cx="69.7" cy="140.5" r="4.5" fill="#c2c2c2" stroke="#555" stroke-width="0.9"/><path d="M65.21 140.80 A4.5 4.5 0 0 1 69.89 136.00 A4.5 4.5 0 0 1 65.21 140.80 Z" fill="#b0b0b0" stroke="#555" stroke-width="0.8"/><circle cx="67.5" cy="138.4" r="4.4" fill="none" stroke="#555" stroke-width="0.8"/><circle cx="65.4" cy="154.2" r="4.5" fill="#fff" stroke="#e8e8e8" stroke-width="0.6"/><circle cx="69.7" cy="158.4" r="4.5" fill="#fff" stroke="#e8e8e8" stroke-width="0.6"/><path d="M65.21 158.70 A4.5 4.5 0 0 1 69.89 153.90 A4.5 4.5 0 0 1 65.21 158.70 Z" fill="#8c8c9a" stroke="#666" stroke-width="0.7"/><circle cx="65.4" cy="172.2" r="4.5" fill="#c2c2c2" stroke="#555" stroke-width="0.9"/><circle cx="69.8" cy="176.5" r="4.5" fill="#fff" stroke="#555" stroke-width="0.9"/>
</svg>
<div class="t mi" style="left:78.4px;top:98.2px">结合</div>
<div class="t mi" style="left:78.4px;top:116.3px">组合</div>
<div class="t mi" style="left:78.4px;top:134.5px">拆分</div>
<div class="t mi" style="left:78.4px;top:152.8px;color:#fff">相交</div>
<div class="t mi" style="left:78.4px;top:170.8px">剪除</div>
<svg width="12" height="16" style="left:76px;top:151px" viewBox="76 151 12 16"><path d="M77.9 152.8 V163.6 L80.4 161.4 L82.2 165.4 L83.8 164.7 L82.1 160.8 H85.4 Z" fill="#000" stroke="#fff" stroke-width="0.8" stroke-linejoin="round"/></svg>

<div id="status" class="a">
<div class="t" style="left:18.6px;top:4.4px;font-size:7.7px;color:#444">幻灯片 2 / 2</div>
<div class="t" style="left:82px;top:4.4px;font-size:7.7px;color:#444">中文（中国）</div>
<svg width="10" height="8" style="left:143px;top:1px" viewBox="0 0 10 8" fill="none" stroke="#555" stroke-width="0.9"><circle cx="5" cy="2" r="1.2"/><path d="M1 5 H9 M5 5 V8"/></svg>
<div class="t" style="left:155px;top:4.4px;font-size:7.7px;color:#444">辅助功能：调查</div>
<svg width="8" height="6" style="left:705px;top:2.4px" viewBox="0 0 8 6" fill="none" stroke="#555" stroke-width="1"><path d="M1.4 4 L4 1.2 L6.6 4"/></svg>
<div class="t" style="left:717.4px;top:4.4px;font-size:7.7px;color:#444">备注</div>
<div class="a" style="left:751.4px;top:3.2px;width:9.4px;height:4px;background:#555"></div>
<div class="t" style="left:764.4px;top:4.4px;font-size:7.7px;color:#444">批注</div>
<div class="a" style="left:791px;top:0;width:27px;height:7px;background:#b4b4b4"></div>
<div class="a" style="left:800.6px;top:3px;width:8.6px;height:4px;background:#f4f4f4;border:0.8px solid #666"></div>
<div class="a" style="left:826.6px;top:3.4px;width:4.4px;height:4px;background:#444"></div>
<div class="a" style="left:833.2px;top:3.4px;width:4.4px;height:4px;background:#444"></div>
<svg width="14" height="5" style="left:852px;top:2.6px" viewBox="0 0 14 5" fill="none" stroke="#555" stroke-width="0.9"><path d="M0.6 5 V0.6 H6.4 V5 M6.4 0.6 H12.4 V5"/><path d="M2.2 3 H4.8 M8 3 H10.8"/></svg>
<svg width="12" height="4" style="left:880.4px;top:3px" viewBox="0 0 12 4" fill="none" stroke="#555" stroke-width="1"><path d="M0 0.8 H11.4 M1.4 0.8 V4 M10 0.8 V4"/></svg>
<div class="a" style="left:944.6px;top:3px;width:10.8px;height:10.8px;border-radius:50%;background:#fff;border:0.6px solid #d0d0d0"></div>
<div class="a" style="left:998.4px;top:3.6px;width:1.1px;height:4px;background:#555"></div>
<div class="t" style="left:1018.6px;top:4.4px;font-size:7.7px;color:#444">83%</div>
<svg width="10" height="5" style="left:1054.4px;top:2.6px" viewBox="0 0 10 5" fill="none" stroke="#555" stroke-width="0.9"><path d="M0.6 5 V0.6 H9.2 V5 M4.9 0.6 V5"/></svg>
</div>
</body>
</html>
